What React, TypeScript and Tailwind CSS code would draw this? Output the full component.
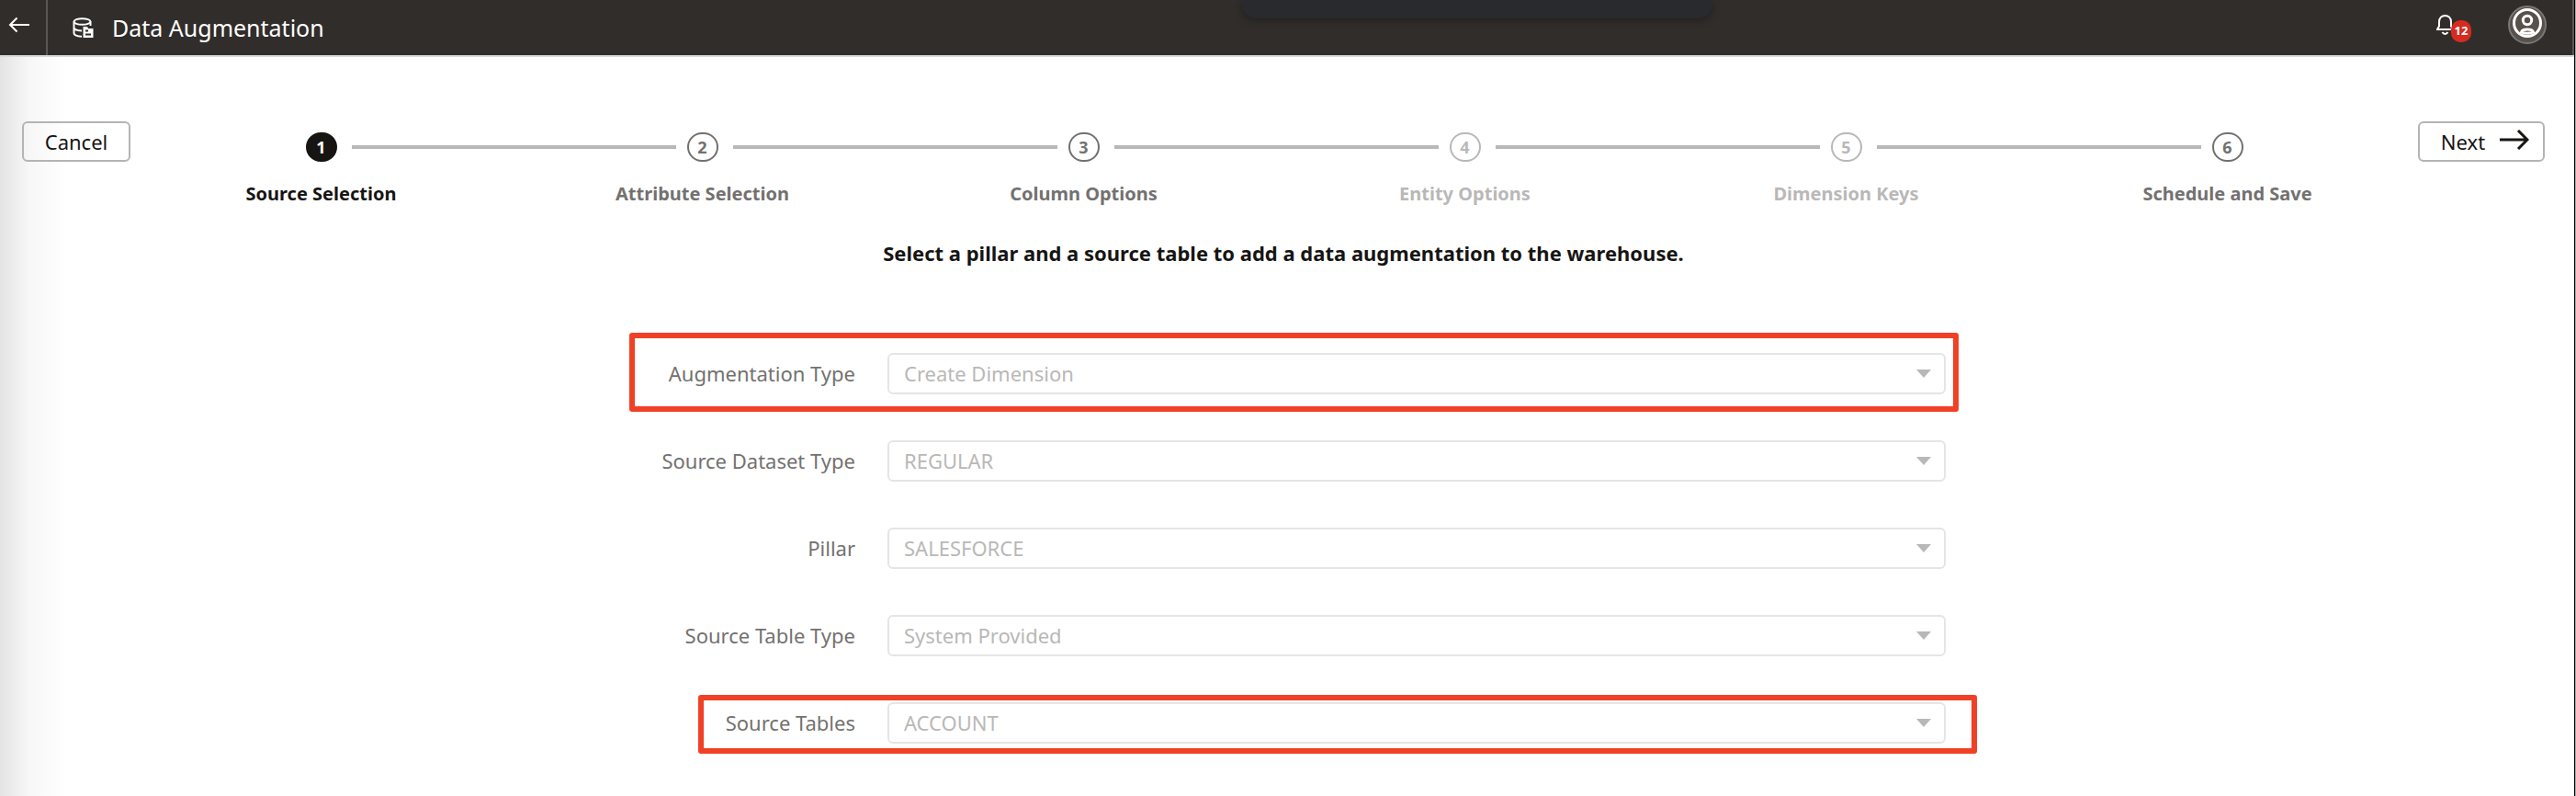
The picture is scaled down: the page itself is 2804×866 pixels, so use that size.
import React from 'react';

type StepState = 'current' | 'visited' | 'disabled';

const steps: { label: string; state: StepState }[] = [
  { label: 'Source Selection', state: 'current' },
  { label: 'Attribute Selection', state: 'visited' },
  { label: 'Column Options', state: 'visited' },
  { label: 'Entity Options', state: 'disabled' },
  { label: 'Dimension Keys', state: 'disabled' },
  { label: 'Schedule and Save', state: 'visited' }
];

const circleStyles: Record<StepState, string> = {
  current: 'bg-[#161513] border-[#161513] text-white',
  visited: 'border-[#73716f] text-[#73716f]',
  disabled: 'border-[#b9b8b7] text-[#b9b8b7]'
};

const labelStyles: Record<StepState, string> = {
  current: 'text-[#161513]',
  visited: 'text-[#73716f]',
  disabled: 'text-[#b9b8b7]'
};

const fields = [
  { id: 'augmentation-type', label: 'Augmentation Type', value: 'Create Dimension', highlight: 'left-[9px] -right-[14px] -top-[22px] -bottom-[19px]' },
  { id: 'dataset-type', label: 'Source Dataset Type', value: 'REGULAR' },
  { id: 'pillar', label: 'Pillar', value: 'SALESFORCE' },
  { id: 'table-type', label: 'Source Table Type', value: 'System Provided' },
  { id: 'source-tables', label: 'Source Tables', value: 'ACCOUNT', highlight: 'left-[84px] -right-[34px] -top-2 -bottom-[11px]' }
];

const Header = () => (
  <header className="relative flex h-[62px] items-stretch border-b-2 border-[#d9d9d9] bg-[#312d2a] text-white">
    <button aria-label="Back" className="flex w-[52px] items-center border-r-2 border-[#5b5755] pb-1.5 pl-[9px]">
      <svg width="24" height="18" viewBox="0 0 24 18" fill="none" stroke="currentColor" strokeWidth="2">
        <path d="M23 9H2M9.500 1.500 2 9l7.500 7.500" />
      </svg>
    </button>
    <div className="flex flex-1 items-center gap-5 pl-[27px]">
      <svg width="23" height="23" viewBox="0 0 23 23" fill="none" stroke="currentColor" strokeWidth="2">
        <ellipse cx="10.500" cy="4.500" rx="9" ry="3.300" />
        <path d="M1.500 4.500V17c0 2 3.500 3.500 8.500 3.700M1.500 11c0 1.800 3.500 3.300 8.500 3.500M19.500 4.500V9" />
        <path d="M11.500 10h4.500l1 2h5.500v10h-11z" fill="currentColor" stroke="none" />
        <path d="M14 14.500h3M14 18.500h6" stroke="#312d2a" strokeWidth="1.800" />
      </svg>
      <h1 className="text-[25px] leading-9">Data Augmentation</h1>
    </div>

    {/* Floating window tab */}
    <div className="absolute top-0 left-[57.4%] h-5 w-[513px] -translate-x-1/2 rounded-b-2xl bg-[#292a2e] shadow-[0_3px_8px_rgba(0,0,0,0.3)]" />

    <div className="flex items-start gap-10 border-r-2 border-[#5b5755] pr-7">
      <button aria-label="Notifications" className="relative mt-4 flex h-[30px] w-[38px] items-start">
        <svg width="19" height="23" viewBox="0 0 19 23" fill="none" stroke="currentColor" strokeWidth="2">
          <path d="M1 16h17l-2-3.500V8c0-4.500-3-7-6.500-7S3 3.500 3 8v4.500z" />
          <path d="M6.500 19c1.500 2.500 4.500 2.500 6 0" />
        </svg>
        <span className="absolute top-1.5 right-0 flex h-6 w-[22px] items-center justify-center rounded-[10px] bg-[#d62b20] text-[13px] font-bold">
          12
        </span>
      </button>
      <button aria-label="Account" className="mt-1.5">
        <svg width="42" height="42" viewBox="0 0 42 42" fill="none">
          <circle cx="21" cy="21" r="20" fill="#58504a" stroke="#77787a" strokeWidth="2" />
          <circle cx="21" cy="19" r="14.500" stroke="#fff" strokeWidth="3" />
          <circle cx="21" cy="16" r="4.700" stroke="#fff" strokeWidth="3" />
          <path d="M14.500 29c1-4 12-4 13 0-3 1.500-10 1.500-13 0z" stroke="#fff" strokeWidth="3" />
        </svg>
      </button>
    </div>
  </header>
);

const Stepper = () => (
  <ol className="flex flex-1 pt-3">
    {steps.map((step, index) => (
      <li key={step.label} className="flex-1 text-center">
        <div className="grid grid-cols-[1fr_34px_1fr] items-center">
          <div className="pr-3">{index > 0 && <div className="h-1 bg-[#b9b7b7]" />}</div>
          <div className={`flex h-8 items-center justify-center rounded-full border-2 text-lg font-bold ${circleStyles[step.state]}`}>
            {index + 1}
          </div>
          <div className="pl-4">{index < steps.length - 1 && <div className="h-1 bg-[#b9b7b7]" />}</div>
        </div>
        <div className={`mt-[23px] text-xl leading-6 font-bold ${labelStyles[step.state]}`}>{step.label}</div>
      </li>
    ))}
  </ol>
);

const App = () => {
  return (
    <div className="border-r border-[#a8a8a8]">
      <div className="flex min-h-screen flex-col border-r border-black bg-white font-['Noto_Sans',sans-serif] text-[#161513]">
        <Header />
        <main className="flex-1 bg-linear-to-r from-[#e4e4e4] via-[#f7f7f7] via-[32px] to-white to-[72px] pt-[70px] pr-8 pl-6">
          <div className="flex items-start">
            <button className="h-11 w-[118px] rounded-md border-2 border-[#b5b4b3] text-[22px] leading-7">Cancel</button>
            <Stepper />
            <button className="flex h-11 w-[138px] items-center justify-center gap-4 rounded-md border-2 border-[#b5b4b3] pl-2 text-[22px] leading-7">
              Next
              <svg width="32" height="22" viewBox="0 0 32 22" fill="none" stroke="currentColor" strokeWidth="3" className="mb-1">
                <path d="M0 11h29M20 1l10 10-10 10" />
              </svg>
            </button>
          </div>

          <h2 className="mt-[38px] text-center text-[22px] leading-7 font-bold">
            Select a pillar and a source table to add a data augmentation to the warehouse.
          </h2>

          <form className="mx-auto mt-[95px] flex max-w-[1442px] flex-col gap-[50px] text-[22px]">
            {fields.map((field) => (
              <div key={field.id} className="relative grid grid-cols-[255px_1fr] items-center gap-[35px]">
                <label htmlFor={field.id} className="text-right text-[#73716f]">{field.label}</label>
                <div className="relative">
                  <select
                    id={field.id}
                    disabled
                    className="block h-[45px] w-full appearance-none rounded-md border-2 border-[#e6e5e5] bg-white pl-4 text-[#b9b8b7] opacity-100"
                  >
                    <option>{field.value}</option>
                  </select>
                  <svg width="16" height="9" viewBox="0 0 16 9" className="pointer-events-none absolute top-[18px] right-4 fill-[#b9b7b7]">
                    <path d="M0 0h16L8 9z" />
                  </svg>
                </div>
                {field.highlight && (
                  <div className={`pointer-events-none absolute rounded-[3px] border-[6px] border-[#f04126] ${field.highlight}`} />
                )}
              </div>
            ))}
          </form>
        </main>
      </div>
    </div>
  );
};

export default App;
